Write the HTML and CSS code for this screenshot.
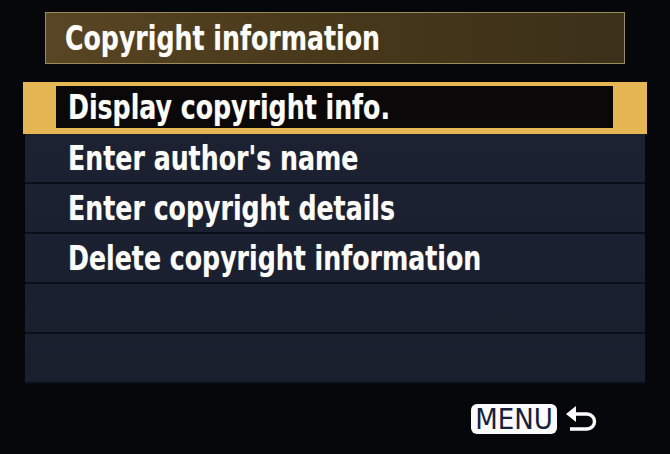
FILE: index.html
```html
<!DOCTYPE html>
<html>

<head>
	<meta charset="utf-8">
	<title>Copyright information</title>
	<link rel="stylesheet" href="styles.css">
</head>

<body>
	<div class="screen">
		<div class="title-bar"><span class="label">Copyright information</span></div>
		<div class="menu-list">
			<div class="menu-row selected"><span class="row-inner"><span class="label">Display copyright info.</span></span></div>
			<div class="menu-row"><span class="row-inner"><span class="label">Enter author's name</span></span></div>
			<div class="menu-row"><span class="row-inner"><span class="label">Enter copyright details</span></span></div>
			<div class="menu-row"><span class="row-inner"><span class="label">Delete copyright information</span></span></div>
			<div class="menu-row"><span class="row-inner"></span></div>
			<div class="menu-row"><span class="row-inner"></span></div>
		</div>
		<div class="footer">
			<span class="menu-badge">MENU</span>
			<svg class="back-arrow" width="32" height="26" viewBox="0 0 32 26">
				<polygon points="0,8 10,0 10,16" fill="#fff" />
				<path d="M9 8 H21 A7.5 7.5 0 0 1 21 23 H4" fill="none" stroke="#fff" stroke-width="3.4" />
			</svg>
		</div>
	</div>
</body>

</html>
```

FILE: styles.css
```css
html, body {
	margin: 0;
	padding: 0;
	background-color: #05070b;
}

.screen {
	width: 670px;
	height: 454px;
	padding-top: 12px;
	box-sizing: border-box;
	font-family: "DejaVu Sans Condensed", "DejaVu Sans", sans-serif;
	font-weight: bold;
	color: #fbfbf8;
}

/* camera font is narrower than anything installed */
.label {
	display: inline-block;
	transform: scaleX(0.825);
	transform-origin: left center;
	white-space: nowrap;
	text-shadow: 0 0 1px rgba(255, 255, 255, 0.4);
}

.title-bar {
	margin-left: 45px;
	width: 559px;
	height: 50px;
	padding-left: 19px;
	border: 1px solid #9a8a5c;
	background: linear-gradient(90deg, #584523 0%, #47381a 50%, #3b3019 100%);
	font-size: 34px;
	line-height: 50px;
}

.menu-list {
	margin-top: 19px;
	margin-left: 25px;
	width: 620px;
	background: linear-gradient(180deg, #1c2232 0%, #1a1f2e 100%);
}

.menu-row {
	height: 48px;
	border-bottom: 2px solid #0b0e16;
	display: flex;
	font-size: 34px;
}

.row-inner {
	flex: 1;
	padding-left: 43px;
	line-height: 48px;
}

.menu-row.selected {
	background-color: #e6b655;
	border-bottom-color: #e6b655;
	height: 42px;
	margin: -1px -2px 0 -2px;
	padding: 4px 34px 4px 33px;
}

.selected .row-inner {
	background-color: #0a0808;
	padding-left: 12px;
	line-height: 43px;
}

.footer {
	display: flex;
	align-items: center;
	justify-content: flex-end;
	gap: 9px;
	padding-right: 72px;
	margin-top: 20px;
}

.menu-badge {
	display: flex;
	align-items: center;
	justify-content: center;
	background-color: #fafafa;
	color: #17203a;
	border-radius: 6px;
	height: 30px;
	width: 86px;
	font-size: 29px;
	font-weight: normal;
	line-height: 30px;
}
```
